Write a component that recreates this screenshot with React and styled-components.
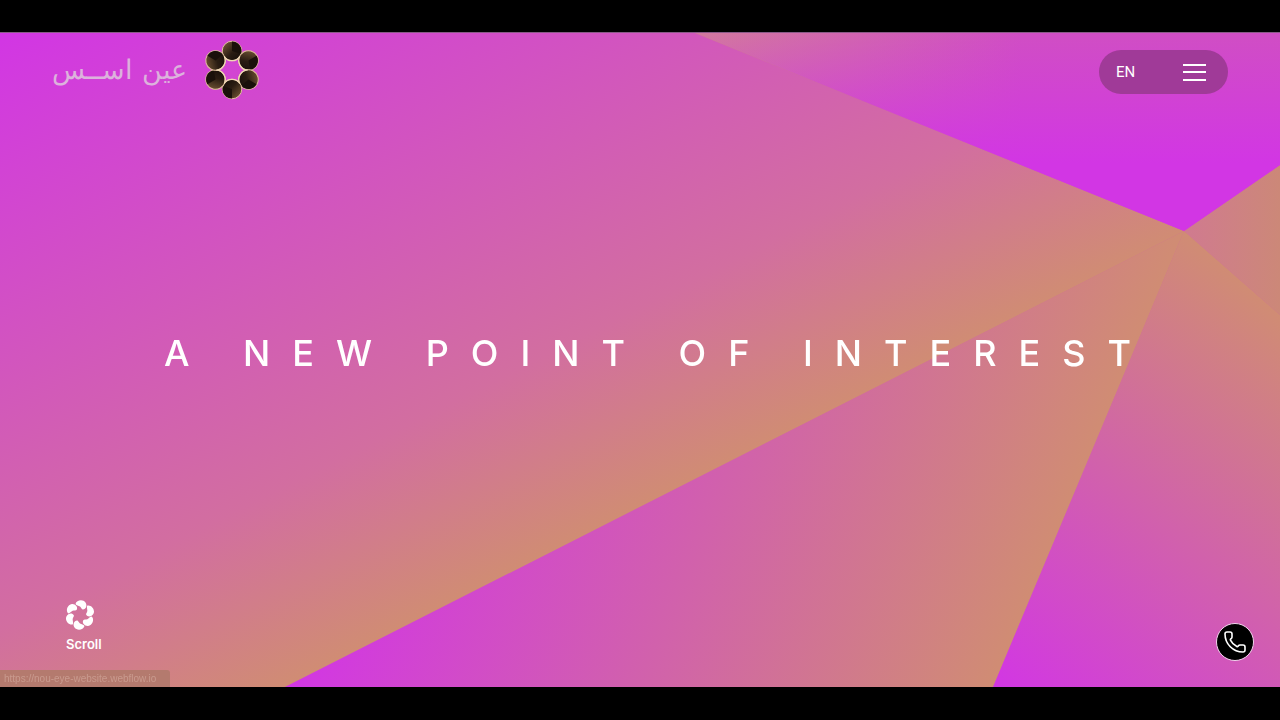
import React from 'react';
import styled, { createGlobalStyle } from 'styled-components';
import { Phone } from 'lucide-react';

const GlobalStyle = createGlobalStyle`
  html, body {
    margin: 0;
    background: #000;
  }
`;

const Page = styled.div`
  width: 1280px;
  height: 720px;
  display: flex;
  flex-direction: column;
  overflow: hidden;
  background: #000;
`;

const BlackBar = styled.div`
  height: ${(p) => p.$height}px;
  flex: none;
  background: #000;
`;

const Stage = styled.main`
  position: relative;
  flex: 1;
  display: flex;
  flex-direction: column;
  border-top: 1px solid #8a5a88;
  overflow: hidden;
  background: #d0708f;
`;

const Backdrop = styled.svg`
  position: absolute;
  inset: 0;
  width: 100%;
  height: 100%;
`;

const Header = styled.header`
  position: relative;
  display: flex;
  justify-content: space-between;
  align-items: flex-start;
  padding: 7px 52px 0;
  height: 60px;
`;

const Brand = styled.a`
  display: flex;
  align-items: center;
  gap: 15px;
  text-decoration: none;
`;

const BrandName = styled.span`
  font-family: "DejaVu Sans", sans-serif;
  font-size: 27px;
  font-weight: 200;
  line-height: 60px;
  color: #dcb2dc;
  direction: rtl;
`;

const LogoMark = styled.svg`
  filter: blur(0.4px);
`;

const MenuPill = styled.div`
  width: 129px;
  height: 44px;
  margin: 10px 0 0;
  padding: 0 22px 0 17px;
  box-sizing: border-box;
  display: flex;
  align-items: center;
  justify-content: space-between;
  border-radius: 22px;
  background: #a03a98;
`;

const Lang = styled.span`
  font-family: Roboto, sans-serif;
  font-size: 15px;
  color: #fff;
`;

const Burger = styled.div`
  width: 23px;
  display: flex;
  flex-direction: column;
  gap: 5.5px;
`;

const BurgerLine = styled.span`
  display: block;
  height: 2px;
  background: #fff;
`;

const Hero = styled.section`
  position: relative;
  flex: 1;
  display: flex;
  align-items: center;
  justify-content: center;
  padding: 6px 0 0 37px;
`;

const Title = styled.h1`
  margin: 0;
  font-family: Inter, sans-serif;
  font-size: 36px;
  font-weight: 500;
  letter-spacing: 22px;
  white-space: pre;
  color: #fff;
  filter: blur(0.4px);
`;

const Footer = styled.footer`
  position: relative;
  display: flex;
  justify-content: space-between;
  align-items: flex-end;
  padding: 0 26px 26px 65px;
`;

const ScrollHint = styled.div`
  display: flex;
  flex-direction: column;
  align-items: flex-start;
  gap: 5px;
  margin-bottom: 9px;
`;

const ScrollLabel = styled.span`
  margin-left: 1px;
  font-family: Inter, sans-serif;
  font-size: 13px;
  font-weight: 600;
  line-height: 16px;
  color: #fff;
`;

const CallButton = styled.button`
  width: 38px;
  height: 38px;
  padding: 0;
  display: flex;
  align-items: center;
  justify-content: center;
  border: 1px solid #f3d4ee;
  border-radius: 50%;
  background: #000;
  color: #fff;
`;

const LinkStatus = styled.div`
  position: absolute;
  left: 0;
  bottom: 0;
  width: 170px;
  height: 17px;
  padding-left: 4px;
  box-sizing: border-box;
  border-top-right-radius: 3px;
  background: #b47a6e;
  font-family: "Liberation Sans", sans-serif;
  font-size: 10px;
  line-height: 17px;
  color: #c99a8e;
  white-space: nowrap;
  filter: blur(0.4px);
`;

const MAGENTA = '#d236e4';
const ORANGE = '#d08c74';

// facets of the background, coordinates are relative to the stage
const facets = [
  {
    id: 'f1',
    points: '0,0 695,0 1184,198 285,654 0,654',
    from: [0, 0],
    to: [321, 634],
    stops: [[0, MAGENTA], [0.75, '#d26ea0'], [1, ORANGE]],
  },
  {
    id: 'f2',
    points: '285,654 1184,198 993,654',
    from: [285, 654],
    to: [884, 905],
    stops: [[0, MAGENTA], [1, ORANGE]],
  },
  {
    id: 'f3',
    points: '1184,198 1280,282 1280,654 993,654',
    from: [993, 654],
    to: [1301, 301],
    stops: [[0, MAGENTA], [1, ORANGE]],
  },
  {
    id: 'f4',
    points: '1184,198 1280,132 1280,282',
    from: [1184, 198],
    to: [1280, 198],
    stops: [[0, '#d07a90'], [1, '#cc8878']],
  },
  {
    id: 'f5',
    points: '695,0 1280,0 1280,132 1184,198',
    from: [700, 0],
    to: [1020, 0],
    stops: [[0, '#d2789e'], [1, '#d04ec4']],
  },
  {
    id: 'f6',
    points: '695,0 1280,0 1280,132 1184,198',
    from: [0, 0],
    to: [0, 130],
    stops: [[0, 'rgba(210,54,228,0)'], [1, MAGENTA]],
  },
];

const petals = [0, 60, 120, 180, 240, 300];

const Logo = () => (
  <LogoMark width="60" height="60" viewBox="0 0 60 60">
    <defs>
      <linearGradient id="petal" x1="0" y1="0" x2="1" y2="1">
        <stop offset="0" stopColor="#80603c" />
        <stop offset="0.55" stopColor="#2a1c12" />
        <stop offset="1" stopColor="#140c08" />
      </linearGradient>
    </defs>
    {petals.map((a) => (
      <g key={a} transform={`rotate(${a} 30 30)`}>
        <circle cx="30" cy="11" r="9.8" fill="url(#petal)" stroke="#e0c09c" strokeWidth="1" />
        <path d="M30 11 L30 1.6 A9.4 9.4 0 0 1 39 14 Z" fill="#1a100a" />
        <path d="M22 16.5 A9.8 9.8 0 0 0 38 16.5" fill="none" stroke="#f0d8b4" strokeWidth="1.3" />
      </g>
    ))}
  </LogoMark>
);

const ScrollIcon = () => (
  <svg width="30" height="32" viewBox="0 0 30 32" fill="#fff">
    {petals.map((a) => (
      <path
        key={a}
        transform={`rotate(${a} 15 16)`}
        d="M10.5 5 C11.5 1 18 0 20.5 3.5 C22.5 6.5 21 10.5 18 10.5 C16.5 10.5 16.5 8.5 15 7.5 C13.5 6.6 11.5 6.6 10.5 5 Z"
      />
    ))}
  </svg>
);

const App = () => {
  return (
    <Page>
      <GlobalStyle />
      <BlackBar $height={32} />
      <Stage>
        <Backdrop viewBox="0 0 1280 654" preserveAspectRatio="none">
          <defs>
            {facets.map((f) => (
              <linearGradient
                key={f.id}
                id={f.id}
                gradientUnits="userSpaceOnUse"
                x1={f.from[0]}
                y1={f.from[1]}
                x2={f.to[0]}
                y2={f.to[1]}
              >
                {f.stops.map(([offset, color]) => (
                  <stop key={offset} offset={offset} stopColor={color} />
                ))}
              </linearGradient>
            ))}
          </defs>
          {facets.map((f) => (
            <polygon key={f.id} points={f.points} fill={`url(#${f.id})`} />
          ))}
        </Backdrop>
        <Header>
          <Brand href="#">
            <BrandName>عين اســس</BrandName>
            <Logo />
          </Brand>
          <MenuPill>
            <Lang>EN</Lang>
            <Burger>
              <BurgerLine />
              <BurgerLine />
              <BurgerLine />
            </Burger>
          </MenuPill>
        </Header>
        <Hero>
          <Title>A NEW POINT OF INTEREST</Title>
        </Hero>
        <Footer>
          <ScrollHint>
            <ScrollIcon />
            <ScrollLabel>Scroll</ScrollLabel>
          </ScrollHint>
          <CallButton>
            <Phone size={24} strokeWidth={1.6} />
          </CallButton>
        </Footer>
        <LinkStatus>https://nou-eye-website.webflow.io</LinkStatus>
      </Stage>
      <BlackBar $height={33} />
    </Page>
  );
};

export default App;
